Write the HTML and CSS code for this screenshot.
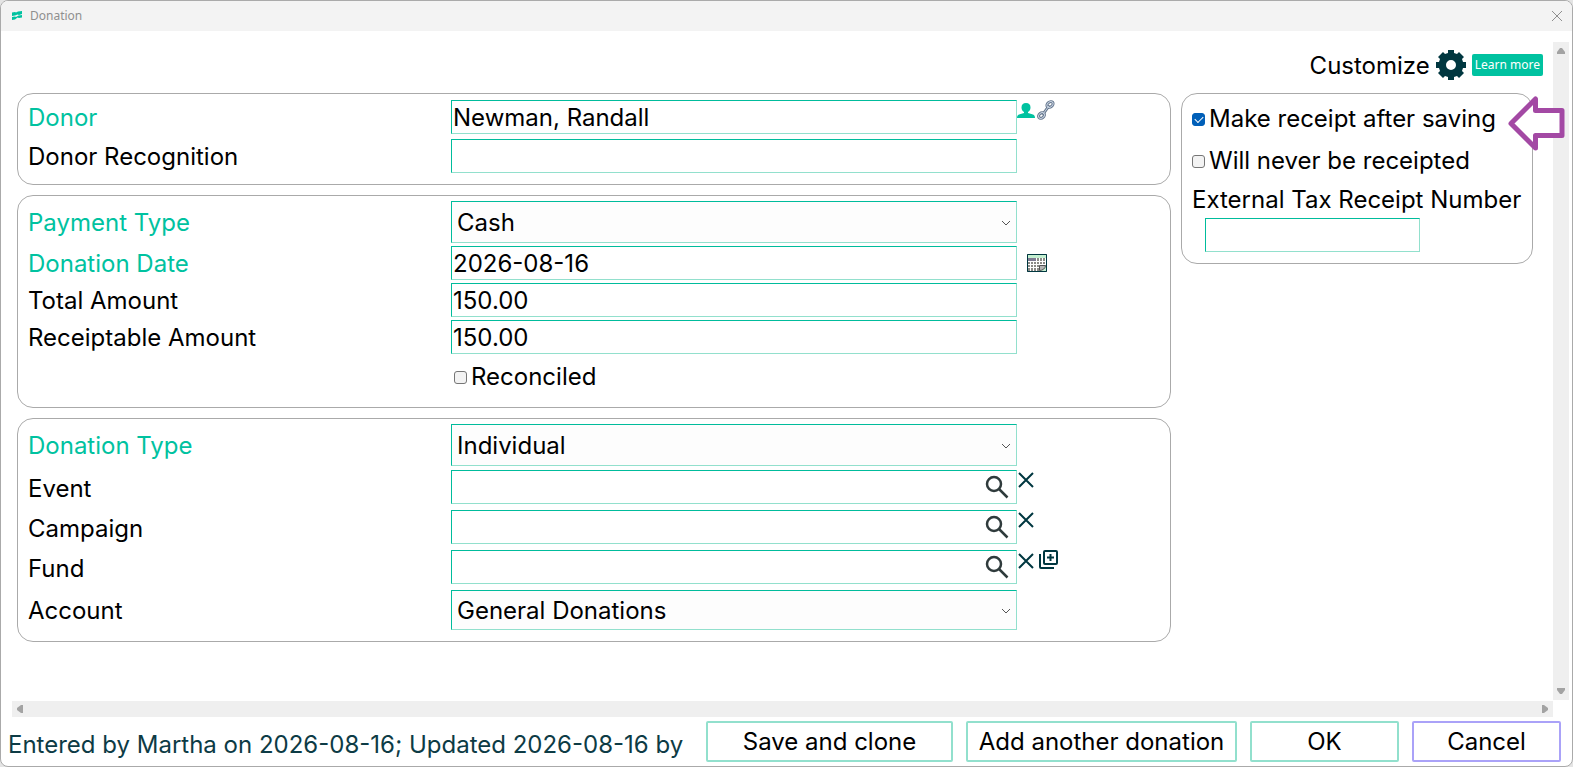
FILE: index.html
```html
<!DOCTYPE html>
<html lang="en">

<head>
    <meta charset="UTF-8">
    <meta name="viewport" content="width=device-width, initial-scale=1.0">
    <title>Donation</title>
    <link rel="stylesheet" href="styles.css">
</head>

<body>
    <div class="window">
        <header class="titlebar">
            <svg class="logo" width="12" height="12" viewBox="0 0 12 12">
                <path d="M1 2.500 4 2l1 .5L7 1.500 11 1v3L8 5 6.500 4.500 4 5.500 1 6zM1 7l3-.5 1 .5 2.500-1.500L11 5v2.500L8 8l-1.500-.5L4 9.500 1 10z" />
            </svg>
            <span class="title">Donation</span>
            <button class="icon-btn close" type="button" aria-label="Close">
                <svg width="12" height="12" viewBox="0 0 12 12"><path d="M1 1l10 10M11 1 1 11" /></svg>
            </button>
        </header>

        <div class="scroll-area">
            <main class="content">
                <div class="toolbar">
                    <span>Customize</span>
                    <button class="icon-btn" type="button" aria-label="Customize">
                        <svg class="gear" width="30" height="30" viewBox="0 0 30 30">
                            <path fill-rule="evenodd" d="M12 0h6v3l3 1 2-2 5 5-2 2 1 3h3v6h-3l-1 3 2 2-5 5-2-2-3 1v3h-6v-3l-3-1-2 2-5-5 2-2-1-3H0v-6h3l1-3-2-2 5-5 2 2 3-1zM15 10a5 5 0 1 0 0 10 5 5 0 0 0 0-10z" />
                        </svg>
                    </button>
                    <a class="learn-more" href="#">Learn more</a>
                </div>

                <form class="columns">
                    <div class="panels">
                        <section class="panel donor">
                            <div class="row">
                                <label class="required" for="donor">Donor</label>
                                <input class="text" type="text" id="donor" value="Newman, Randall">
                                <div class="actions">
                                    <button class="icon-btn" type="button" aria-label="Open donor">
                                        <svg class="person" width="18" height="20" viewBox="0 0 18 20">
                                            <path d="M9 3c3 0 4.500 1.500 4.500 4.500 0 2-1 3.500-2.500 4.500v1l5 1.500c1.300.5 2 1.500 2 3.500H0c0-2 .7-3 2-3.500l5-1.500V12C5.500 11 4.500 9.500 4.500 7.500 4.500 4.500 6 3 9 3z" />
                                        </svg>
                                    </button>
                                    <button class="icon-btn" type="button" aria-label="Link donor">
                                        <svg class="chain" width="18" height="20" viewBox="0 0 18 20">
                                            <g fill="none" stroke-linecap="round">
                                                <path class="chain-edge" d="M6.500 13.500 11.500 6.500" />
                                                <ellipse class="chain-edge" cx="4.500" cy="15.500" rx="3.200" ry="2.400" transform="rotate(-40 4.500 15.500)" />
                                                <ellipse class="chain-edge" cx="13" cy="4.500" rx="3.400" ry="2.400" transform="rotate(-40 13 4.500)" />
                                                <path class="chain-fill" d="M6.500 13.500 11.500 6.500" />
                                                <ellipse class="chain-fill" cx="4.500" cy="15.500" rx="3.200" ry="2.400" transform="rotate(-40 4.500 15.500)" />
                                                <ellipse class="chain-fill" cx="13" cy="4.500" rx="3.400" ry="2.400" transform="rotate(-40 13 4.500)" />
                                            </g>
                                        </svg>
                                    </button>
                                </div>
                            </div>
                            <div class="row">
                                <label for="recognition">Donor Recognition</label>
                                <input class="text" type="text" id="recognition">
                            </div>
                        </section>

                        <section class="panel payment">
                            <div class="row">
                                <label class="required" for="payment-type">Payment Type</label>
                                <div class="select">
                                    <select class="tall" id="payment-type">
                                        <option>Cash</option>
                                    </select>
                                    <svg width="10" height="6" viewBox="0 0 10 6"><path d="M1 1l4 4 4-4" /></svg>
                                </div>
                            </div>
                            <div class="row">
                                <label class="required" for="date">Donation Date</label>
                                <input class="text" type="text" id="date" value="2026-08-16">
                                <div class="actions date-actions">
                                    <button class="icon-btn" type="button" aria-label="Pick a date">
                                        <svg width="20" height="18" viewBox="0 0 20 18">
                                            <path fill="#8b8a86" d="M0 0h20v18H0z" />
                                            <path fill="#c4efd0" d="M1 1h18v3H1z" />
                                            <path stroke="#fff" d="M1 7.500h18M1 10.500h18M1 13.500h15M3.500 7v10M6.500 7v10M9.500 4v13M12.500 4v13M15.500 4v10M18.500 4v6" />
                                            <path fill="#7e7a92" d="M1 4h8v3H1z" />
                                            <path fill="#c4efd0" d="M19 11v6h-7z" />
                                            <path fill="#b5b5b5" stroke="#555" d="M12.500 16.500v-5h6c0 3-3 5-6 5z" />
                                            <path fill="none" stroke="#003740" d="M.5.5h19v17H.5z" />
                                        </svg>
                                    </button>
                                </div>
                            </div>
                            <div class="row">
                                <label for="total">Total Amount</label>
                                <input class="text" type="text" id="total" value="150.00">
                            </div>
                            <div class="row">
                                <label for="receiptable">Receiptable Amount</label>
                                <input class="text" type="text" id="receiptable" value="150.00">
                            </div>
                            <div class="row">
                                <label class="check reconciled"><input type="checkbox">Reconciled</label>
                            </div>
                        </section>

                        <section class="panel details">
                            <div class="row">
                                <label class="required" for="donation-type">Donation Type</label>
                                <div class="select">
                                    <select class="tall" id="donation-type">
                                        <option>Individual</option>
                                    </select>
                                    <svg width="10" height="6" viewBox="0 0 10 6"><path d="M1 1l4 4 4-4" /></svg>
                                </div>
                            </div>
                            <div class="row lookup-row">
                                <label for="event">Event</label>
                                <div class="lookup">
                                    <input type="text" id="event">
                                    <button class="icon-btn" type="button" aria-label="Search events">
                                        <svg class="search" width="24" height="24" viewBox="0 0 24 24"><circle cx="9" cy="9" r="7" /><path d="M14 14l8.500 8.500" /></svg>
                                    </button>
                                </div>
                                <div class="actions">
                                    <button class="icon-btn" type="button" aria-label="Clear event">
                                        <svg class="clear" width="18" height="18" viewBox="0 0 18 18"><path d="M2 2l14 14M16 2 2 16" /></svg>
                                    </button>
                                </div>
                            </div>
                            <div class="row lookup-row">
                                <label for="campaign">Campaign</label>
                                <div class="lookup">
                                    <input type="text" id="campaign">
                                    <button class="icon-btn" type="button" aria-label="Search campaigns">
                                        <svg class="search" width="24" height="24" viewBox="0 0 24 24"><circle cx="9" cy="9" r="7" /><path d="M14 14l8.500 8.500" /></svg>
                                    </button>
                                </div>
                                <div class="actions">
                                    <button class="icon-btn" type="button" aria-label="Clear campaign">
                                        <svg class="clear" width="18" height="18" viewBox="0 0 18 18"><path d="M2 2l14 14M16 2 2 16" /></svg>
                                    </button>
                                </div>
                            </div>
                            <div class="row lookup-row">
                                <label for="fund">Fund</label>
                                <div class="lookup">
                                    <input type="text" id="fund">
                                    <button class="icon-btn" type="button" aria-label="Search funds">
                                        <svg class="search" width="24" height="24" viewBox="0 0 24 24"><circle cx="9" cy="9" r="7" /><path d="M14 14l8.500 8.500" /></svg>
                                    </button>
                                </div>
                                <div class="actions">
                                    <button class="icon-btn" type="button" aria-label="Clear fund">
                                        <svg class="clear" width="18" height="18" viewBox="0 0 18 18"><path d="M2 2l14 14M16 2 2 16" /></svg>
                                    </button>
                                    <button class="icon-btn" type="button" aria-label="Add fund">
                                        <svg class="add" width="22" height="20" viewBox="-2 0 22 20"><rect x="5" y="1" width="13" height="13" rx="1" /><path d="M1 4v13q0 1 1 1h13M11.500 4v7M8 7.500h7" /></svg>
                                    </button>
                                </div>
                            </div>
                            <div class="row">
                                <label for="account">Account</label>
                                <div class="select">
                                    <select id="account">
                                        <option>General Donations</option>
                                    </select>
                                    <svg width="10" height="6" viewBox="0 0 10 6"><path d="M1 1l4 4 4-4" /></svg>
                                </div>
                            </div>
                        </section>
                    </div>

                    <section class="panel receipt">
                        <label class="check"><input type="checkbox" checked>Make receipt after saving</label>
                        <label class="check"><input type="checkbox">Will never be receipted</label>
                        <label for="receipt-number">External Tax Receipt Number</label>
                        <input class="text" type="text" id="receipt-number">
                        <svg class="pointer" width="58" height="56" viewBox="0 0 58 56"><path d="M4 27.500 28.500 3v11.500H55v25H28.500V52z" /></svg>
                    </section>
                </form>
            </main>

            <div class="scrollbar vertical">
                <svg width="8" height="6" viewBox="0 0 8 6"><path d="M3 0h2l3 4v2H0V4z" /></svg>
                <svg width="8" height="6" viewBox="0 0 8 6"><path d="M3 6h2l3-4V0H0v2z" /></svg>
            </div>
            <div class="scrollbar horizontal">
                <svg width="6" height="8" viewBox="0 0 6 8"><path d="M0 3v2l4 3h2V0H4z" /></svg>
                <svg width="6" height="8" viewBox="0 0 6 8"><path d="M6 3v2L2 8H0V0h2z" /></svg>
            </div>
        </div>

        <footer class="footer">
            <p>Entered by Martha on 2026-08-16; Updated 2026-08-16 by</p>
            <button class="btn save" type="button">Save and clone</button>
            <button class="btn another" type="button">Add another donation</button>
            <button class="btn" type="button">OK</button>
            <button class="btn cancel" type="button">Cancel</button>
        </footer>
    </div>
</body>

</html>
```
FILE: styles.css
```css
* {
    box-sizing: border-box;
}

body {
    margin: 0;
    background-color: #e4e4e4;
    font-family: "Inter", sans-serif;
    font-size: 24px;
    line-height: 30px;
    color: #000;
}

input,
select,
button {
    font: inherit;
    color: inherit;
}

svg {
    display: block;
}

.window {
    display: flex;
    flex-direction: column;
    min-height: 100vh;
    border: 1px solid #aaa;
    border-radius: 8px;
    background-color: #fff;
    overflow: hidden;
}

.titlebar {
    display: flex;
    align-items: center;
    height: 30px;
    padding: 0 9px 0 10px;
    background-color: #f3f3f3;
    font: 12px/16px "Noto Sans", sans-serif;
    color: #8f8f8f;
}

.title {
    flex: 1;
    margin-left: 7px;
}

.logo {
    fill: #00c2a0;
}

.icon-btn {
    padding: 0;
    border: 0;
    background: none;
    cursor: pointer;
}

.close svg {
    stroke: #8f8f8f;
}

.scroll-area {
    display: grid;
    flex: 1;
    grid-template-columns: 1fr 16px;
    grid-template-rows: 1fr 16px;
    gap: 1px 0;
    padding: 11px 3px 0 11px;
}

.content {
    padding: 6px 20px 0 5px;
}

.toolbar {
    display: flex;
    align-items: center;
    justify-content: flex-end;
    gap: 6px;
    height: 34px;
    margin-right: -10px;
}

.toolbar span {
    padding-top: 2px;
}

.gear {
    fill: #003740;
}

.learn-more {
    padding: 3px;
    border-radius: 2px;
    background-color: #00c2a0;
    font: 12px/16px "Noto Sans", sans-serif;
    color: #fff;
    text-decoration: none;
}

.columns {
    display: flex;
    align-items: flex-start;
    gap: 10px;
    margin-top: 11px;
}

.panels {
    display: flex;
    flex: 1;
    flex-direction: column;
    gap: 10px;
}

.panel {
    display: flex;
    flex-direction: column;
    padding: 5px 10px 11px;
    border: 1px solid #aaa;
    border-radius: 16px;
}

.donor {
    gap: 5px;
    padding-top: 6px;
}

.payment {
    gap: 3px;
    padding-bottom: 10px;
}

.details {
    gap: 4px;
}

.row {
    display: grid;
    grid-template-columns: 423fr 566fr 143fr;
    align-items: center;
}

.row > label {
    padding-top: 2px;
}

.required {
    color: #00c2a0;
}

.text,
.lookup {
    width: 100%;
    height: 34px;
    border: 1px solid #92e0cd;
    border-top-color: #00bc9c;
    border-left-color: #00bc9c;
    border-radius: 0;
    background-color: #fff;
}

.text {
    padding: 0 1px;
}

.select {
    position: relative;
}

.select svg {
    position: absolute;
    right: 6px;
    top: 50%;
    margin-top: -2px;
    fill: none;
    stroke: #555;
    pointer-events: none;
}

select {
    display: block;
    width: 100%;
    height: 40px;
    padding: 2px 5px 0;
    border: 1px solid #92e0cd;
    border-top-color: #00bc9c;
    border-left-color: #00bc9c;
    border-radius: 0;
    background-color: #fdfdfd;
    appearance: none;
}

.tall {
    height: 42px;
}

.actions {
    display: flex;
    align-self: start;
    gap: 2px;
}

.date-actions {
    align-self: center;
    padding-left: 10px;
}

.person {
    fill: #00c2a0;
}

.chain-edge {
    stroke: #65768c;
    stroke-width: 3;
}

.chain-fill {
    stroke: #c7d2e2;
    stroke-width: 1;
}

.check {
    display: flex;
    align-items: center;
    gap: 4px;
}

.check input {
    appearance: none;
    width: 13px;
    height: 13px;
    margin: 0;
    border: 1px solid #767676;
    border-radius: 3px;
    background-color: #f3f3f3;
}

.check input:checked {
    display: grid;
    place-items: center;
    border-color: #005fb8;
    background-color: #005fb8;
}

.check input:checked::before {
    content: "";
    width: 7px;
    height: 4px;
    margin-bottom: 2px;
    border-left: 1px solid #fff;
    border-bottom: 1px solid #fff;
    transform: rotate(-45deg);
}

.row > .reconciled {
    grid-column: 2;
    height: 40px;
    padding: 0 0 0 3px;
}

.lookup-row {
    height: 36px;
}

.lookup {
    display: flex;
    align-self: start;
    align-items: center;
    padding-right: 7px;
}

.lookup input {
    flex: 1;
    min-width: 0;
    padding: 0 1px;
    border: 0;
    background: none;
}

.search,
.clear,
.add {
    fill: none;
    stroke: #003740;
    stroke-width: 2;
}

.search {
    stroke: #2f3b3c;
    stroke-width: 2.5;
}

.clear {
    margin-top: 1px;
}

.receipt {
    position: relative;
    width: 352px;
    padding-top: 10px;
}

.receipt .check {
    margin-bottom: 12px;
}

.receipt label[for] {
    margin-top: -3px;
    white-space: nowrap;
}

.receipt .text {
    width: 215px;
    margin: 3px 0 0 13px;
}

/* callout arrow on top of the panel edge and the scrollbar */
.pointer {
    position: absolute;
    top: 2px;
    right: -33px;
    fill: #fff;
    stroke: #a349a4;
    stroke-width: 5;
    stroke-linejoin: round;
}

.scrollbar {
    display: flex;
    align-items: center;
    justify-content: space-between;
    background-color: #efefef;
    fill: #a3a3a3;
}

.vertical {
    flex-direction: column;
    padding: 6px 0;
}

.horizontal {
    padding: 0 5px;
}

.footer {
    display: flex;
    align-items: center;
    gap: 13px;
    padding: 4px 11px 4px 7px;
}

.footer p {
    flex: 1;
    margin: 6px 0 0;
    color: #0d3b45;
    white-space: nowrap;
}

.btn {
    width: 149px;
    height: 41px;
    padding: 0;
    border: 2px solid #92e0cd;
    border-radius: 2px;
    background-color: #fff;
}

.save {
    width: 247px;
}

.another {
    width: 271px;
}

.cancel {
    border-color: #aaa2f8;
}
```
